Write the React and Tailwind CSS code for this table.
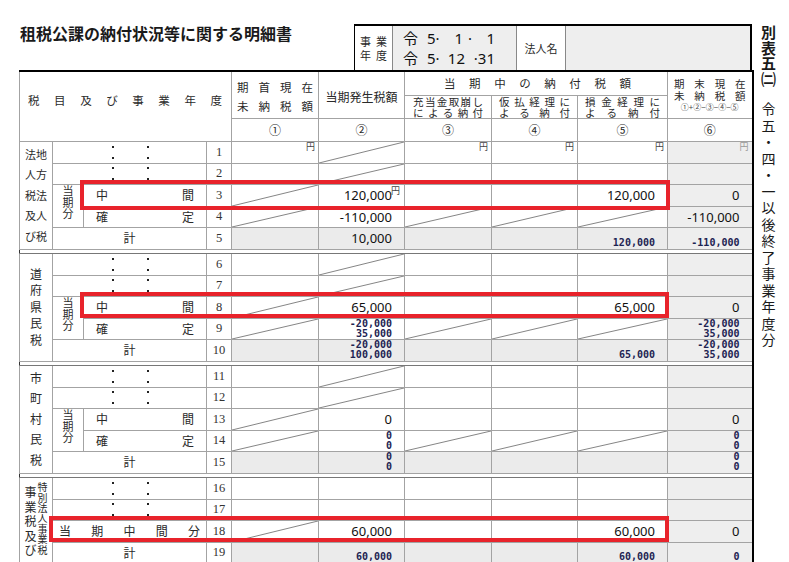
import React, { Fragment } from "react";

const Spread = ({ t, className = "" }) => (
  <div className={`flex justify-between ${className}`}>
    {[...t].map((c, i) => (
      <span key={i}>{c}</span>
    ))}
  </div>
);

const Diag = () => (
  <svg className="absolute inset-0 w-full h-full" viewBox="0 0 100 100" preserveAspectRatio="none">
    <line x1="0" y1="100" x2="100" y2="0" stroke="#666" strokeWidth="0.8" vectorEffect="non-scaling-stroke" />
  </svg>
);

const Dots = () => (
  <div className="flex pl-[59px] gap-[33px]">
    {[0, 1].map((i) => (
      <div key={i} className="flex flex-col gap-[9px]">
        <span className="block w-[2px] h-[2px] bg-[#222]" />
        <span className="block w-[2px] h-[2px] bg-[#222]" />
      </div>
    ))}
  </div>
);

const Val = ({ c, last }) => {
  const bg = last ? "bg-[#eeeeee]" : c.g ? "bg-[#ebebeb]" : "bg-white";
  const single = c.s && c.s.length === 1;
  return (
    <td
      className={`relative p-0 pr-[12px] text-right border border-[#a3a3a3] ${single ? "align-bottom pb-[1px]" : "align-middle"} ${bg}`}
    >
      {c.d && <Diag />}
      {c.y && (
        <span className={`absolute top-0 right-[3px] text-[9px] leading-[10px] ${last ? "text-[#9a9a9a]" : "text-[#444]"}`}>
          円
        </span>
      )}
      {c.v && <span className="relative font-['Noto_Sans',sans-serif] text-[13px] leading-[16px] text-[#111]">{c.v}</span>}
      {c.ys && <span className="absolute top-[1px] right-[4px] text-[9px] leading-[10px] text-[#444]">円</span>}
      {c.s && (
        <div className="relative font-['DejaVu_Sans_Mono',monospace] font-bold text-[10px] leading-[10px] text-[#1d2352]">
          {c.s.map((l, i) => (
            <div key={i}>{l}</div>
          ))}
        </div>
      )}
    </td>
  );
};

const E = {};
const D = { d: 1 };
const G = { g: 1 };

const sections = [
  {
    label: (
      <div className="flex flex-col items-center text-[11px] leading-[20.5px]">
        {["法地", "人方", "税法", "及人", "び税"].map((p) => (
          <span key={p}>{p}</span>
        ))}
      </div>
    ),
    rows: [
      { n: 1, k: "dots", c: [{ y: 1 }, D, { y: 1 }, { y: 1 }, { y: 1 }, { y: 1 }] },
      { n: 2, k: "dots", c: [E, D, E, E, E, E] },
      { n: 3, k: "mid", c: [D, { v: "120,000", ys: 1 }, E, E, { v: "120,000" }, { v: "0" }] },
      { n: 4, k: "fix", c: [D, { v: "-110,000" }, D, D, D, { v: "-110,000" }] },
      { n: 5, k: "total", c: [G, { g: 1, v: "10,000" }, G, G, { g: 1, s: ["120,000"] }, { s: ["-110,000"] }] },
    ],
  },
  {
    label: (
      <div className="flex flex-col items-center text-[12px] leading-[16.5px]">
        {[..."道府県民税"].map((p) => (
          <span key={p}>{p}</span>
        ))}
      </div>
    ),
    rows: [
      { n: 6, k: "dots", c: [E, D, E, E, E, E] },
      { n: 7, k: "dots", c: [E, D, E, E, E, E] },
      { n: 8, k: "mid", c: [D, { v: "65,000" }, E, E, { v: "65,000" }, { v: "0" }] },
      { n: 9, k: "fix", c: [D, { s: ["-20,000", "35,000"] }, D, D, D, { s: ["-20,000", "35,000"] }] },
      {
        n: 10,
        k: "total",
        c: [G, { g: 1, s: ["-20,000", "100,000"] }, G, G, { g: 1, s: ["65,000"] }, { s: ["-20,000", "35,000"] }],
      },
    ],
  },
  {
    label: (
      <div className="flex flex-col items-center text-[12px] leading-[20.5px]">
        {[..."市町村民税"].map((p) => (
          <span key={p}>{p}</span>
        ))}
      </div>
    ),
    rows: [
      { n: 11, k: "dots", c: [E, D, E, E, E, E] },
      { n: 12, k: "dots", c: [E, D, E, E, E, E] },
      { n: 13, k: "mid", c: [D, { v: "0" }, E, E, E, { v: "0" }] },
      { n: 14, k: "fix", c: [D, { s: ["0", "0"] }, D, D, D, { s: ["0", "0"] }] },
      { n: 15, k: "total", c: [G, { g: 1, s: ["0", "0"] }, G, G, G, { s: ["0", "0"] }] },
    ],
  },
  {
    label: (
      <div className="flex justify-center gap-[1px]">
        <div className="flex flex-col items-center text-[12px] leading-[14.5px] pt-[3px]">
          {[..."事業税及び"].map((p, i) => (
            <span key={i}>{p}</span>
          ))}
        </div>
        <div className="flex flex-col items-center text-[10px] leading-[10.4px]">
          {[..."特別法人事業税"].map((p, i) => (
            <span key={i}>{p}</span>
          ))}
        </div>
      </div>
    ),
    rows: [
      { n: 16, k: "dots", c: [E, E, E, E, E, E] },
      { n: 17, k: "dots", c: [E, E, E, E, E, E] },
      { n: 18, k: "midall", c: [D, { v: "60,000" }, E, E, { v: "60,000" }, { v: "0" }] },
      { n: 19, k: "total", c: [G, { g: 1, s: ["60,000"] }, G, G, { g: 1, s: ["60,000"] }, { s: ["0"] }] },
    ],
  },
];

const rowH = ["h-[22px]", "h-[21px]", "h-[22px]", "h-[21px]", "h-[22px]"];

const cellB = "border border-[#a3a3a3] p-0";

const labelCells = (r) => {
  if (r.k === "dots")
    return (
      <td colSpan={2} className={cellB}>
        <Dots />
      </td>
    );
  if (r.k === "mid")
    return (
      <>
        <td rowSpan={2} className={`${cellB} align-middle`}>
          <div className="flex flex-col items-center text-[11px] leading-[11.5px] pb-[6px]">
            <span>当</span>
            <span>期</span>
            <span>分</span>
          </div>
        </td>
        <td className={cellB}>
          <Spread t="中間" className="pl-[12px] pr-[12px] text-[12px]" />
        </td>
      </>
    );
  if (r.k === "fix")
    return (
      <td className={cellB}>
        <Spread t="確定" className="pl-[12px] pr-[12px] text-[12px]" />
      </td>
    );
  if (r.k === "midall")
    return (
      <td colSpan={2} className={cellB}>
        <Spread t="当期中間分" className="pl-[6px] pr-[6px] text-[12px]" />
      </td>
    );
  return (
    <td colSpan={2} className={`${cellB} text-center text-[12px]`}>
      計
    </td>
  );
};

export default function App() {
  return (
    <div className="relative w-[789px] h-[562px] overflow-hidden bg-white text-[#2a2a2a] font-['Noto_Sans_CJK_JP',sans-serif]">
      <div className="flex">
        <div className="w-[752px] shrink-0">
          <div className="flex h-[70px]">
            <h1 className="w-[357px] pl-[20px] pt-[23px] text-[16px] leading-[20px] font-bold text-[#1a1a1a]">
              租税公課の納付状況等に関する明細書
            </h1>
            <div className="mt-[24px] h-[46px] grid grid-cols-[38px_124px_49px_184px] border-t-2 border-l border-r-2 border-black">
              <div className="flex flex-col items-center justify-center text-[11px] leading-[14px] border-r border-[#888]">
                <span className="tracking-[5px] pl-[5px]">事業</span>
                <span className="tracking-[5px] pl-[5px]">年度</span>
              </div>
              <div className="bg-[#eeeeee] flex flex-col justify-center pl-[10px] text-[15px] leading-[20px] text-[#111] font-['Noto_Sans',sans-serif] border-r border-[#888]">
                <div className="flex">
                  <span className="w-[24px] font-['Noto_Sans_CJK_JP',sans-serif]">令</span>
                  <span className="w-[16px]">5·</span>
                  <span className="w-[20px] text-right">1</span>
                  <span className="w-[14px] text-center">·</span>
                  <span className="w-[18px] text-right">1</span>
                </div>
                <div className="flex">
                  <span className="w-[24px] font-['Noto_Sans_CJK_JP',sans-serif]">令</span>
                  <span className="w-[16px]">5·</span>
                  <span className="w-[22px] text-right">12</span>
                  <span className="w-[30px] text-right">·31</span>
                </div>
              </div>
              <div className="flex items-center justify-center text-[11px] bg-white border-r border-[#888]">法人名</div>
              <div className="bg-[#eeeeee]" />
            </div>
          </div>

          <table className="ml-[19px] w-[733px] table-fixed border-collapse border-t-2 border-t-black border-l border-l-[#333] border-r-2 border-r-black text-[12px]">
            <colgroup>
              <col className="w-[33px]" />
              <col className="w-[31px]" />
              <col className="w-[123px]" />
              <col className="w-[25px]" />
              <col className="w-[87px]" />
              <col className="w-[86px]" />
              <col className="w-[87px]" />
              <col className="w-[86px]" />
              <col className="w-[90px]" />
              <col className="w-[85px]" />
            </colgroup>
            <tbody>
              <tr className="h-[24px]">
                <td rowSpan={3} colSpan={4} className={`${cellB} align-middle pb-[12px]`}>
                  <Spread t="税目及び事業年度" className="pl-[8px] pr-[9px] text-[11.5px]" />
                </td>
                <td rowSpan={2} className={`${cellB} align-top pt-[6px]`}>
                  <Spread t="期首現在" className="px-[5px] text-[11.5px] leading-[19px]" />
                  <Spread t="未納税額" className="px-[5px] text-[11.5px] leading-[19px]" />
                </td>
                <td rowSpan={2} className={`${cellB} text-center align-middle pt-[5px] text-[12px]`}>
                  当期発生税額
                </td>
                <td colSpan={3} className={`${cellB} align-middle`}>
                  <Spread t="当期中の納付税額" className="pl-[39px] pr-[36px] text-[11.5px]" />
                </td>
                <td rowSpan={2} className={`${cellB} align-middle`}>
                  <Spread t="期末現在" className="px-[6px] text-[10.5px] leading-[12px]" />
                  <Spread t="未納税額" className="px-[6px] text-[10.5px] leading-[12px]" />
                  <div className="text-center text-[8px] leading-[10px] text-[#444]">①+②−③−④−⑤</div>
                </td>
              </tr>
              <tr className="h-[22px]">
                <td className={`${cellB} align-middle`}>
                  <Spread t="充当金取崩し" className="px-[8px] text-[10.5px] leading-[11px]" />
                  <Spread t="による納付" className="px-[8px] text-[10.5px] leading-[11px]" />
                </td>
                <td className={`${cellB} align-middle`}>
                  <Spread t="仮払経理に" className="px-[7px] text-[10.5px] leading-[11px]" />
                  <Spread t="よる納付" className="px-[7px] text-[10.5px] leading-[11px]" />
                </td>
                <td className={`${cellB} align-middle`}>
                  <Spread t="損金経理に" className="px-[7px] text-[10.5px] leading-[11px]" />
                  <Spread t="よる納付" className="px-[7px] text-[10.5px] leading-[11px]" />
                </td>
              </tr>
              <tr className="h-[23px]">
                {["①", "②", "③", "④", "⑤", "⑥"].map((c) => (
                  <td key={c} className={`${cellB} text-center text-[12px]`}>
                    {c}
                  </td>
                ))}
              </tr>

              {sections.map((s, si) => (
                <Fragment key={si}>
                  {si > 0 && (
                    <tr className="h-[4px]">
                      <td colSpan={10} className="p-0 border-y border-[#777]" />
                    </tr>
                  )}
                  {s.rows.map((r, ri) => (
                    <tr key={r.n} className={rowH[ri]}>
                      {ri === 0 && (
                        <td rowSpan={s.rows.length} className={`${cellB} align-middle`}>
                          {s.label}
                        </td>
                      )}
                      {labelCells(r)}
                      <td className={`${cellB} text-center font-['Liberation_Serif',serif] text-[12.5px] text-[#333]`}>{r.n}</td>
                      {r.c.map((c, ci) => (
                        <Val key={ci} c={c} last={ci === 5} />
                      ))}
                    </tr>
                  ))}
                </Fragment>
              ))}
            </tbody>
          </table>
        </div>

        <div className="w-[37px] flex flex-col items-center pt-[24px] pr-[4px] text-[#1a1a1a]">
          <div className="flex flex-col items-center text-[15px] leading-[15.5px] font-bold">
            {[..."別表五㈡"].map((c, i) => (
              <span key={i}>{c}</span>
            ))}
          </div>
          <div className="mt-[14px] flex flex-col items-center text-[14px] leading-[16.5px]">
            {[..."令五・四・一以後終了事業年度分"].map((c, i) => (
              <span key={i}>{c}</span>
            ))}
          </div>
        </div>
      </div>

      <div className="absolute left-[80px] top-[180px] w-[590px] h-[30px] border-[4px] border-[#e8232b]" />
      <div className="absolute left-[80px] top-[292px] w-[589px] h-[26px] border-[4px] border-[#e8232b]" />
      <div className="absolute left-[49px] top-[516px] w-[620px] h-[26px] border-[4px] border-[#e8232b]" />
    </div>
  );
}
